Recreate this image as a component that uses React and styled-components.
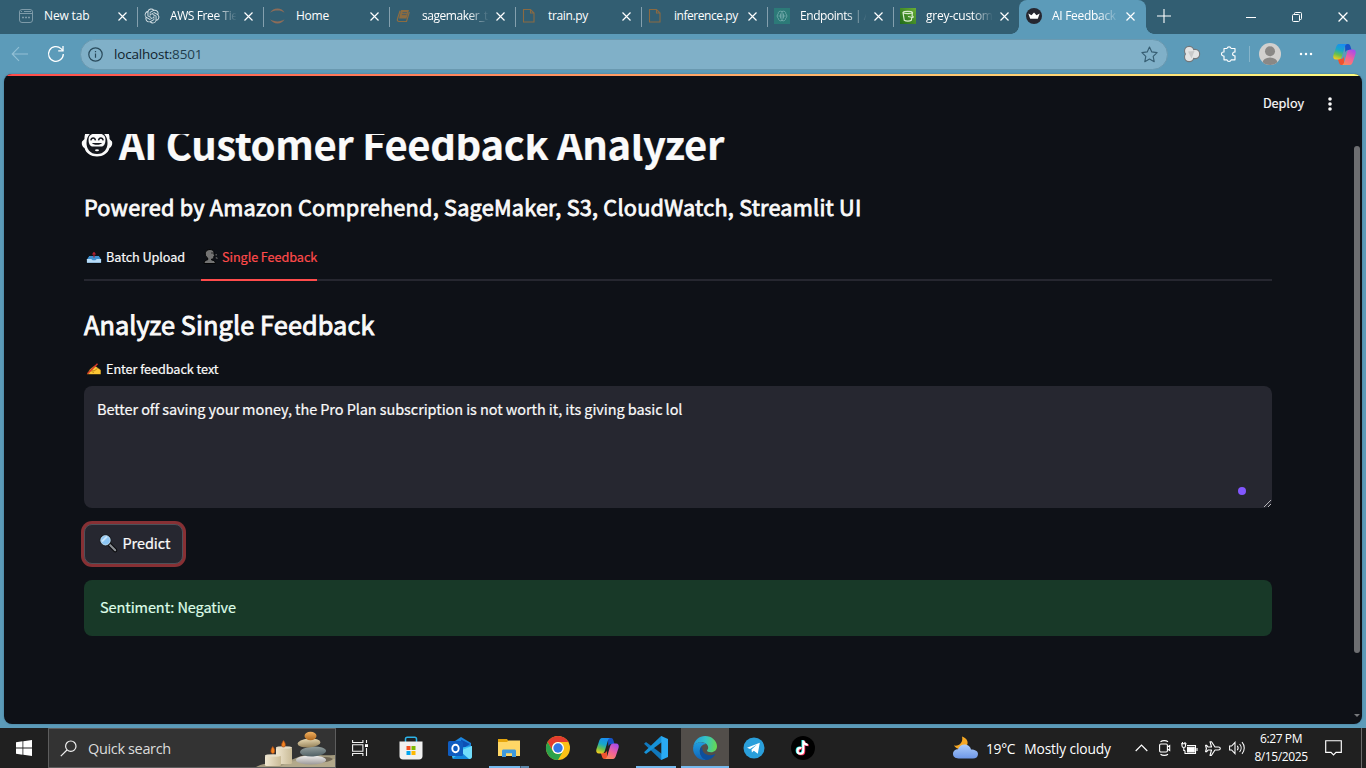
import React from "react";
import styled, { createGlobalStyle, css } from "styled-components";

const ui = `"Open Sans", "Noto Sans", sans-serif`;
const source = `"Noto Sans CJK SC", "Noto Sans", sans-serif`;

const GlobalStyle = createGlobalStyle`
  * { box-sizing: border-box; }
  html, body { margin: 0; padding: 0; background: #5c9bb9; }
  body { width: 1366px; height: 768px; overflow: hidden; font-family: ${ui}; }
  svg { display: block; flex: none; overflow: visible; }
  h1, h2, h3, p { margin: 0; }
  button, textarea { font: inherit; }
`;

const Screen = styled.div`
  width: 1366px;
  height: 768px;
  display: flex;
  flex-direction: column;
  overflow: hidden;
  background: #5c9bb9;
`;

/* ---------- browser chrome ---------- */

const TabStrip = styled.div`
  height: 34px;
  flex: none;
  display: flex;
  padding-left: 12px;
  background: #325e72;
`;

const Tab = styled.div`
  width: ${(p) => (p.$active ? 127 : 126)}px;
  height: 34px;
  display: flex;
  align-items: center;
  position: relative;
  padding: 0 0 2px 6px;
  color: #fff;
  ${(p) =>
    p.$divider &&
    css`
      &::after {
        content: "";
        position: absolute;
        right: 0;
        top: 7px;
        width: 1px;
        height: 20px;
        background: #84a0ae;
      }
    `}
  ${(p) =>
    p.$active &&
    css`
      background: #5c9bb9;
      border-radius: 8px 8px 0 0;
      margin-left: -1px;
      padding-left: 7px;
      &::before,
      &::after {
        content: "";
        position: absolute;
        bottom: 0;
        width: 8px;
        height: 8px;
      }
      &::before {
        left: -8px;
        background: radial-gradient(circle at 0 0, #325e72 7.5px, #5c9bb9 8px);
      }
      &::after {
        right: -8px;
        background: radial-gradient(circle at 100% 0, #325e72 7.5px, #5c9bb9 8px);
      }
    `}
`;

const Favicon = styled.span`
  width: 16px;
  height: 16px;
  margin-right: 10px;
  flex: none;
`;

const TabTitle = styled.span`
  width: 66px;
  white-space: nowrap;
  font-size: 12px;
  line-height: 18px;
  letter-spacing: ${(p) => p.$ls || 0}px;
  ${(p) =>
    p.$fade &&
    css`
      mask-image: linear-gradient(90deg, #000 46px, transparent 67px);
    `}
`;

const TabClose = styled.span`
  margin-left: 8px;
`;

const NewTab = styled.div`
  width: 34px;
  padding: 9px 0 0 11px;
`;

const WindowControls = styled.div`
  margin-left: auto;
  display: flex;
`;

const WindowButton = styled.div`
  width: 46px;
  height: 34px;
  display: grid;
  place-items: center;
`;

const Toolbar = styled.div`
  height: 40px;
  flex: none;
  display: flex;
  align-items: center;
  padding-left: 11px;
`;

const NavIcon = styled.span`
  width: ${(p) => p.$w}px;
  flex: none;
`;

const AddressBar = styled.div`
  width: 1088px;
  height: 31px;
  display: flex;
  align-items: center;
  border: 1px solid #6a99b0;
  border-radius: 16px;
  background: #80b0c8;
  padding: 0 9px 0 7px;
  margin-right: 16px;
`;

const Url = styled.span`
  flex: 1;
  margin-left: 11px;
  font-size: 13.5px;
  line-height: 20px;
  letter-spacing: -0.2px;
  color: #10232d;
  b { font-weight: 400; color: #1f3e4d; }
`;

const ToolDivider = styled.span`
  width: 1px;
  height: 16px;
  background: #86b4ca;
  margin: 0 9px 0 12px;
`;

/* ---------- page ---------- */

const Page = styled.div`
  height: 650px;
  flex: none;
  margin: 0 4px 4px;
  border-radius: 8px;
  overflow: hidden;
  display: flex;
  flex-direction: column;
  background: #0e1117;
  font-family: ${source};
  color: #fafafa;
  -webkit-text-stroke: 0.2px;
  position: relative;
  box-shadow: 0 0 2px #3d7391;
`;

const Decoration = styled.div`
  height: 2px;
  flex: none;
  background: linear-gradient(90deg, #ff4b4b, #fffd80);
`;

const AppHeader = styled.header`
  height: 58px;
  flex: none;
  display: flex;
  justify-content: flex-end;
  align-items: center;
  padding: 0 30px 3px 0;
`;

const Deploy = styled.span`
  font-size: 12.7px;
  line-height: 20px;
  letter-spacing: -0.07px;
  margin: 0 24px 2px 0;
`;

const Main = styled.main`
  flex: 1;
  min-height: 0;
  overflow: hidden;
  padding: 0 90px 0 80px;
  display: flex;
  flex-direction: column;
  align-items: stretch;
`;

const Title = styled.h1`
  display: flex;
  align-items: center;
  height: 48px;
  margin: -15px 0 0 -3px;
  font-size: 40px;
  line-height: 48px;
  font-weight: 700;
  letter-spacing: -0.36px;
  white-space: nowrap;
  flex: none;
  svg { margin-right: 6px; }
`;

const Heading = styled.h2`
  font-size: ${(p) => p.$size}px;
  line-height: 36px;
  height: 36px;
  flex: none;
  font-weight: 400;
  -webkit-text-stroke: ${(p) => p.$stroke}px;
  letter-spacing: ${(p) => p.$ls || 0}px;
  margin-top: ${(p) => p.$top}px;
  white-space: nowrap;
`;

const PageTabs = styled.div`
  display: flex;
  flex: none;
  gap: 16px;
  height: 45px;
  margin-top: 11px;
  box-shadow: inset 0 -2px #262730;
`;

const PageTab = styled.div`
  display: flex;
  align-items: center;
  gap: 4px;
  padding: 0 0 5px 2px;
  font-size: 12.7px;
  letter-spacing: -0.08px;
  white-space: nowrap;
  width: ${(p) => p.$w}px;
  color: ${(p) => (p.$selected ? "#ff4b4b" : "#fafafa")};
  box-shadow: ${(p) => (p.$selected ? "inset 0 -2px #ff4b4b" : "none")};
`;

const FieldLabel = styled.label`
  display: flex;
  align-items: center;
  gap: 4px;
  flex: none;
  height: 22px;
  margin-top: 15px;
  padding-left: 2px;
  font-size: 12.7px;
  letter-spacing: -0.07px;
`;

const TextField = styled.div`
  height: 122px;
  flex: none;
  margin-top: 7px;
  padding: 11px 13px;
  border-radius: 8px;
  background: #262730;
  font-size: 14.5px;
  line-height: 24px;
  letter-spacing: -0.077px;
  position: relative;
  white-space: nowrap;
`;

const StatusDot = styled.span`
  position: absolute;
  right: 26px;
  bottom: 13px;
  width: 8px;
  height: 8px;
  border-radius: 50%;
  background: #8257fe;
`;

const Resizer = styled.span`
  position: absolute;
  right: 1px;
  bottom: 1px;
`;

const PredictButton = styled.button`
  width: 99px;
  height: 40px;
  flex: none;
  margin-top: 16px;
  padding: 0 0 3px 14px;
  display: flex;
  align-items: center;
  gap: 5.5px;
  border: 1px solid #4f5159;
  border-radius: 8px;
  background: #262730;
  color: #fafafa;
  font-size: 14.5px;
  letter-spacing: -0.08px;
  box-shadow: 0 0 0 3px #873034;
`;

const Alert = styled.div`
  height: 56px;
  flex: none;
  margin-top: 16px;
  padding: 15px 16px;
  border-radius: 8px;
  background: #183928;
  color: #dffde9;
  font-size: 14.5px;
  line-height: 24px;
  letter-spacing: -0.08px;
`;

const ScrollThumb = styled.div`
  position: absolute;
  right: 2px;
  top: 72px;
  width: 6px;
  height: 507px;
  border-radius: 3px;
  background: #6d6e71;
`;

const ScrollArrow = styled.div`
  position: absolute;
  right: 2px;
  bottom: 7px;
  border: 3px solid transparent;
  border-top-color: #77797c;
  border-bottom: 0;
`;

/* ---------- taskbar ---------- */

const Taskbar = styled.div`
  height: 40px;
  flex: none;
  display: flex;
  background: #202020;
  color: #fff;
`;

const TaskSlot = styled.div`
  width: 48px;
  height: 40px;
  flex: none;
  margin-right: ${(p) => p.$gap || 0}px;
  display: grid;
  place-items: center;
  position: relative;
  background: ${(p) => (p.$active ? "#524e4a" : "transparent")};
  ${(p) =>
    p.$running &&
    css`
      &::after {
        content: "";
        position: absolute;
        bottom: 0;
        left: ${p.$active ? 0 : 4}px;
        right: ${p.$active ? 0 : 4}px;
        height: 2px;
        background: ${p.$stacked ? "linear-gradient(90deg, #76b9ed 31px, #3f5a70 31px 32px, #5c88ab 32px)" : "#76b9ed"};
      }
    `}
`;

const SearchBox = styled.div`
  width: 288px;
  height: 40px;
  flex: none;
  display: flex;
  align-items: center;
  border: 1px solid #5d5d5d;
  background: #333;
  padding-left: 11px;
`;

const SearchText = styled.span`
  flex: 1;
  margin-left: 11px;
  font-size: 14.5px;
  letter-spacing: -0.35px;
  color: #dcdcdc;
`;

const Tray = styled.div`
  margin-left: auto;
  display: flex;
  align-items: center;
  width: 413px;
`;

const Weather = styled.div`
  display: flex;
  align-items: center;
  flex: none;
  width: 182px;
  font-size: 13.8px;
  white-space: nowrap;
`;

const WeatherText = styled.span`
  margin-left: ${(p) => p.$left}px;
  letter-spacing: ${(p) => p.$ls || 0}px;
`;

const TrayIcons = styled.div`
  display: flex;
  align-items: center;
  gap: 8px;
`;

const TrayIcon = styled.span`
  margin-right: ${(p) => p.$after || 0}px;
`;

const Clock = styled.div`
  width: 64px;
  margin-left: 3px;
  display: flex;
  flex-direction: column;
  align-items: center;
  font-size: 12px;
  line-height: 18px;
  letter-spacing: -0.4px;
  white-space: nowrap;
`;

const Notifications = styled.div`
  margin: 0 19px 0 12px;
`;

const DesktopEdge = styled.div`
  width: 1px;
  height: 40px;
  background: #6b6b6b;
`;

/* ---------- icons ---------- */

const CloseGlyph = ({ size = 9, color = "#fff" }) => (
  <svg width={size} height={size} viewBox="0 0 9 9" stroke={color} strokeWidth="1.15" fill="none">
    <path d="M.5.5l8 8M8.5.5l-8 8" />
  </svg>
);

const NewTabIcon = () => (
  <svg width="16" height="16" viewBox="0 0 16 16" fill="none" stroke="#7e9ba9" strokeWidth="1">
    <rect x="1.5" y="1.5" width="13" height="13" rx="2.5" />
    <path d="M1.5 5.5h13M3 3.5h1M6 3.5h7" />
    <path d="M4 9.5h2M7 9.5h2M10 9.5h2" strokeWidth="1.5" />
  </svg>
);

const KnotIcon = () => (
  <svg width="15" height="15" viewBox="-.8 -.8 24 24" fill="#d5e0e5">
    <path d="M22.28 9.82a5.98 5.98 0 0 0-.52-4.91 6.05 6.05 0 0 0-6.51-2.9A6.07 6.07 0 0 0 4.98 4.18a5.98 5.98 0 0 0-4 2.9 6.05 6.05 0 0 0 .74 7.1 5.98 5.98 0 0 0 .51 4.91 6.05 6.05 0 0 0 6.52 2.9A5.98 5.98 0 0 0 13.26 24a6.06 6.06 0 0 0 5.77-4.21 5.99 5.99 0 0 0 4-2.9 6.06 6.06 0 0 0-.75-7.07zm-9.02 12.61a4.48 4.48 0 0 1-2.88-1.04l.14-.08 4.78-2.76a.8.8 0 0 0 .39-.68v-6.74l2.02 1.17v5.62a4.5 4.5 0 0 1-4.45 4.51zM3.6 18.3a4.47 4.47 0 0 1-.54-3.01l.14.08 4.78 2.76a.77.77 0 0 0 .78 0l5.84-3.37v2.33l-4.85 2.84a4.5 4.5 0 0 1-6.15-1.63zM2.34 7.9a4.49 4.49 0 0 1 2.37-1.98v5.68a.77.77 0 0 0 .39.68l5.81 3.35-2.02 1.17-4.83-2.79A4.5 4.5 0 0 1 2.34 7.87zm16.6 3.86L13.1 8.36l2.02-1.16 4.83 2.79a4.49 4.49 0 0 1-.68 8.1v-5.68a.79.79 0 0 0-.33-.65zm2.01-3.02-.14-.09-4.77-2.78a.78.78 0 0 0-.79 0L9.41 9.23V6.9l4.83-2.79a4.5 4.5 0 0 1 6.71 4.63zM8.31 12.86l-2.02-1.16V6.07a4.5 4.5 0 0 1 7.38-3.45l-.14.08-4.78 2.76a.8.8 0 0 0-.39.68zm1.1-2.36L12 9l2.6 1.5v3L12 15l-2.6-1.5z" />
  </svg>
);

const JupyterIcon = () => (
  <svg width="16" height="16" viewBox="0 0 16 16" fill="#8d6c58">
    <path d="M0 4.700C1.500 2 4.500.5 7.500.5s6 1.500 7 4.200C12.500 3.200 10 2.600 7.500 2.600S2 3.200 0 4.700z" />
    <path d="M0 11.300C1.500 14 4.500 15.500 7.500 15.500s6-1.500 7-4.200c-2 1.500-4.500 2.100-7 2.100S2 12.800 0 11.300z" />
  </svg>
);

const BookIcon = () => (
  <svg width="16" height="16" viewBox="0 0 16 16">
    <path d="M5 2h8l-2.500 8.500H3z" fill="#8d6c40" />
    <path d="M4.100 2.800L1.500 10.800c-.6 1.700.2 2.700 1.500 2.700h7.500L13.300 4" fill="none" stroke="#8d6c40" strokeWidth="1.200" />
    <path d="M6.500 4.600h4.500M5.900 6.600h4.500" stroke="#48606a" strokeWidth=".9" />
  </svg>
);

const FileIcon = () => (
  <svg width="16" height="16" viewBox="0 0 16 16" fill="none" stroke="#8a6a42" strokeWidth="1.100">
    <path d="M1.500 1.500h7l3.500 3.500v9h-10.500zM8.500 1.500v3.500h3.500" />
  </svg>
);

const EndpointsIcon = () => (
  <svg width="16" height="16" viewBox="0 0 16 16">
    <rect width="16" height="16" fill="#2c7a78" />
    <g fill="none" stroke="#72a9aa" strokeWidth=".9">
      <path d="M8 3v10M8 3.500C5.500 2.500 4 4 4.200 5.800 2.800 7 2.800 9.200 4.200 10.200 4.200 12 6 13.500 8 12.500M8 3.500c2.500-1 4 .5 3.800 2.300 1.400 1.200 1.400 3.400 0 4.400 0 1.800-1.800 3.300-3.800 2.300" />
      <path d="M4.500 8h2.300M9.200 8h2.300M6.500 5.500v5M9.500 5.500v5" />
    </g>
  </svg>
);

const BucketIcon = () => (
  <svg width="16" height="16" viewBox="0 0 16 16">
    <defs>
      <linearGradient id="bk" x1="0" y1="1" x2="1" y2="0">
        <stop offset="0" stopColor="#1f6b1a" />
        <stop offset="1" stopColor="#69ae35" />
      </linearGradient>
    </defs>
    <rect width="16" height="16" fill="url(#bk)" />
    <path d="M3 4.500l1.300 7.800c1.500 1.200 5.500 1.200 7 0L12 8.500M3 4.500C4 3 11.500 3 12.500 4.500 11.500 6 4 6 3 4.500zM8 8.500l4.500 1c1 0 1-1 0-1.500M12.500 4.500L12 8" fill="none" stroke="#d9ecce" strokeWidth="1.200" />
  </svg>
);

const CrownIcon = () => (
  <svg width="16" height="16" viewBox="0 0 16 16">
    <circle cx="8" cy="8" r="8" fill="#262730" />
    <path d="M2.300 5.600l3.200 1.600L8 4.600l2.500 2.600 3.200-1.600-1.900 5.200H4.200z" fill="#fff" />
  </svg>
);

const BackIcon = () => (
  <svg width="18" height="16" viewBox="0 0 18 16" fill="none" stroke="#93c0d5" strokeWidth="1.100">
    <path d="M17 8H1.500M8 1.200L1.200 8 8 14.800" />
  </svg>
);

const ReloadIcon = () => (
  <svg width="18" height="18" viewBox="0 0 18 18" fill="none" stroke="#fff" strokeWidth="1.300">
    <path d="M16.300 9A7.400 7.400 0 1 1 14 3.600l2 2" />
    <path d="M16 1v4.800h-4.800" />
  </svg>
);

const InfoIcon = () => (
  <svg width="15" height="15" viewBox="0 0 15 15" fill="none" stroke="#28495a" strokeWidth="1.200">
    <circle cx="7.500" cy="7.500" r="6.700" />
    <path d="M7.500 6.500v4.300M7.500 3.900v1.300" />
  </svg>
);

const StarIcon = () => (
  <svg width="17" height="17" viewBox="0 0 17 17" fill="none" stroke="#365e73" strokeWidth="1.150" strokeLinejoin="round">
    <path d="M8.500 1l2.300 4.900 5.300.7-3.900 3.700 1 5.400-4.700-2.600-4.700 2.600 1-5.400L.9 6.600l5.300-.7z" />
  </svg>
);

const TrefoilIcon = () => (
  <svg width="16" height="16" viewBox="0 0 16 16">
    <g fill="#d8d8d8" stroke="#74777a" strokeWidth="1.600">
      <circle cx="5.200" cy="5" r="4.400" /><circle cx="5.200" cy="11" r="4.400" /><circle cx="11" cy="8" r="4.400" />
    </g>
    <g fill="#e4e4e4"><circle cx="5.200" cy="5" r="4.100" /><circle cx="5.200" cy="11" r="4.100" /><circle cx="11" cy="8" r="4.100" /></g>
    <path d="M4 5.500l6.500-.5-3 7.500z" fill="#c9c9c9" />
  </svg>
);

const PuzzleIcon = () => (
  <svg width="16" height="16" viewBox="0 0 16 16" fill="none" stroke="#fff" strokeWidth="1.150" strokeLinejoin="round">
    <path d="M3 2.500h3a2.100 2.100 0 0 1 4.100 0h3.900v3.600a1.500 1.500 0 0 0-1 3.600l1 .2v3.900h-3.900a2.100 2.100 0 0 1-4.100 0H3V10H2.500a2 2 0 0 1 0-4H3z" />
  </svg>
);

const AvatarIcon = () => (
  <svg width="22" height="22" viewBox="0 0 22 22">
    <defs><clipPath id="av"><circle cx="11" cy="11" r="11" /></clipPath></defs>
    <g clipPath="url(#av)">
      <rect width="22" height="22" fill="#d2d0ce" />
      <circle cx="11" cy="8.300" r="5" fill="#8a8886" />
      <ellipse cx="11" cy="20" rx="7.500" ry="5.500" fill="#8a8886" />
    </g>
  </svg>
);

const DotsIcon = () => (
  <svg width="14" height="4" viewBox="0 0 14 4" fill="#fff">
    <circle cx="2" cy="2" r="1.250" /><circle cx="7" cy="2" r="1.250" /><circle cx="12" cy="2" r="1.250" />
  </svg>
);

const KebabIcon = () => (
  <svg width="4" height="14" viewBox="0 0 4 14" fill="#fafafa">
    <circle cx="2" cy="2" r="1.800" /><circle cx="2" cy="7" r="1.800" /><circle cx="2" cy="12" r="1.800" />
  </svg>
);

const CopilotIcon = ({ id }) => (
  <svg width="23" height="21" viewBox="0 0 23 21">
    <defs>
      <linearGradient id={id + "a"} x1=".6" y1="0" x2=".3" y2="1">
        <stop offset="0" stopColor="#1a8df0" /><stop offset=".4" stopColor="#17a7c9" />
        <stop offset=".7" stopColor="#69c04c" /><stop offset="1" stopColor="#f4cd1d" />
      </linearGradient>
      <linearGradient id={id + "b"} x1=".7" y1="0" x2=".2" y2="1">
        <stop offset="0" stopColor="#a94bea" /><stop offset=".5" stopColor="#f0609c" /><stop offset="1" stopColor="#fd8b55" />
      </linearGradient>
    </defs>
    <path d="M12 0h3c1.800 0 2.200 1.500 2.700 3.200L18.500 6h-3.200c-1.800 0-2.600 1-3 2.500z" fill="#1653c6" />
    <path d="M11 21H8.500c-1.800 0-2.300-1.600-2.800-3.300L4.800 15H8c1.500 0 2.500-1 3-2.500z" fill="#f0532f" />
    <path d="M6 0h8c-1.200.4-1.800 1.500-2.300 3.200L9 12.300C8.400 14.500 7.400 15.500 5.500 15.500H3c-2.300 0-3.300-1.800-2.600-4.300L3 3.500C3.700 1.200 4.500 0 6 0z" fill={`url(#${id}a)`} />
    <path d="M17 21H9c1.200-.4 1.800-1.500 2.300-3.200l2.700-9C14.600 6.500 15.600 5.500 17.500 5.500H20c2.300 0 3.300 1.800 2.600 4.300L20 17.500c-.7 2.300-1.500 3.500-3 3.500z" fill={`url(#${id}b)`} />
  </svg>
);

const FaceIcon = () => (
  <svg width="32" height="34" viewBox="0 0 32 34">
    <path d="M16 0C8 0 3 6 3.500 13L1 15.500c-.7 3 .3 5.500 2.500 6.500C5 27.500 10 30.500 16 30.500S27 27.500 28.500 22c2.200-1 3.200-3.500 2.500-6.500L28.500 13C29 6 24 0 16 0z" fill="#fafafa" />
    <path d="M16 5C9 5 5.500 11 5.500 17S9 28 16 28s10.500-5 10.500-11S23 5 16 5z" fill="#15181e" />
    <path d="M8 11C10 6 22 6 24 11c1.300 4.500-.5 9.500-3 9.500H11C8.500 20.500 6.700 15.500 8 11z" fill="#fafafa" />
    <path d="M9.800 14.300c.7-3.200 4-3.200 4.700 0M17.500 14.300c.7-3.200 4-3.200 4.700 0" stroke="#15181e" strokeWidth="1.500" fill="none" />
    <path d="M11 17h10c-.8 2.400-9.200 2.400-10 0z" fill="#15181e" />
    <ellipse cx="16" cy="24.300" rx="2" ry="1" fill="#fafafa" />
  </svg>
);

const OutboxIcon = () => (
  <svg width="16" height="16" viewBox="0 0 16 16">
    <path d="M3 7.500h10l2.500 4V15H.5v-3.500z" fill="#3e8fd0" stroke="#050607" strokeWidth=".8" />
    <path d="M.9 11h4.300l1.500 1.300h2.600L10.800 11h4.300v3.700H.9z" fill="#b9dcf7" />
    <path d="M8 4.500v5" stroke="#a81f30" strokeWidth="1.200" />
    <path d="M5.800 6.500L8 3.700l2.200 2.800z" fill="#b01f2e" />
  </svg>
);

const SpeakerHeadIcon = () => (
  <svg width="15" height="17" viewBox="0 0 15 17" stroke="#050607" strokeWidth="1">
    <path d="M1 15.500c0-2.300 1.500-3.300 3.700-3.700V10C2.500 8.500 1.800 6.500 2.500 4.300 3.500 1.500 8 .5 10.200 2.700c.8.900.8 2 .7 3.300l1 1.800-1.100.6c0 2-.5 2.700-2.300 2.700v.8c2.500.4 3.900 1.300 3.900 3.600z" fill="#737373" />
    <path d="M13.200 6v1.500M12.800 9.500l1.700 1" strokeWidth="1.200" stroke="#686868" />
    <circle cx="9" cy="5" r=".7" fill="#111" stroke="none" />
  </svg>
);

const WritingHandIcon = () => (
  <svg width="16" height="14" viewBox="0 0 16 14">
    <path d="M.8 13.300l3-5L8.500 4.500 11 6l4 3v4.500H5z" fill="#fcc735" stroke="#1a1307" strokeWidth=".6" />
    <path d="M5 8.500l3 1.500 3.500-2.500M5.500 10.500l2.500 1" stroke="#b87a14" strokeWidth=".8" fill="none" />
    <path d="M1.500 12.800L11.500 2.800" stroke="#d9372b" strokeWidth="1.500" />
  </svg>
);

const MagnifierIcon = () => (
  <svg width="18" height="18" viewBox="0 0 18 18">
    <path d="M10.500 10.500l5.700 5.700" stroke="#0b0c0e" strokeWidth="4.200" strokeLinecap="round" />
    <path d="M11 11l5.200 5.200" stroke="#8e9297" strokeWidth="2" strokeLinecap="round" />
    <circle cx="6.500" cy="6.300" r="5.500" fill="#8cc6f5" stroke="#191c20" strokeWidth="1.200" />
    <circle cx="6.500" cy="6.300" r="4.700" fill="none" stroke="#c3d9e8" strokeWidth=".8" />
    <path d="M3 7.500L8 2.500" stroke="#c9e6fc" strokeWidth="1.800" />
  </svg>
);

const WindowsIcon = () => (
  <svg width="16" height="16" viewBox="0 0 16 16" fill="#fff">
    <path d="M0 2.200L6.500 1.300v6.200H0zM7.300 1.200L16 0v7.500H7.300zM0 8.400h6.500v6.300L0 13.800zM7.300 8.400H16V16l-8.700-1.200z" />
  </svg>
);

const SearchIcon = () => (
  <svg width="17" height="17" viewBox="0 0 17 17" fill="none" stroke="#f0f0f0" strokeWidth="1.200">
    <circle cx="10.800" cy="6.200" r="5.200" /><path d="M7 10L.8 16.200" />
  </svg>
);

const StonesArt = () => (
  <svg width="79" height="38" viewBox="0 0 79 38">
    <defs>
      <linearGradient id="cd" x1="0" x2="1"><stop offset="0" stopColor="#f1e8d2" /><stop offset="1" stopColor="#c9bb97" /></linearGradient>
      <linearGradient id="s1" x1="0" y1="0" x2="0" y2="1"><stop offset="0" stopColor="#e9d9b2" /><stop offset="1" stopColor="#97835a" /></linearGradient>
      <linearGradient id="s2" x1="0" y1="0" x2="0" y2="1"><stop offset="0" stopColor="#95a09f" /><stop offset="1" stopColor="#4f5f64" /></linearGradient>
      <linearGradient id="s3" x1="0" y1="0" x2="0" y2="1"><stop offset="0" stopColor="#f0efef" /><stop offset="1" stopColor="#9c9998" /></linearGradient>
      <linearGradient id="s4" x1="0" y1="0" x2="0" y2="1"><stop offset="0" stopColor="#f0b160" /><stop offset="1" stopColor="#b2691e" /></linearGradient>
    </defs>
    <path d="M0 38C10 32 30 34 40 29s20-2 39-3v12z" fill="#a39a7e" />
    <path d="M30 34c12-4 28-4 49-4v8H24z" fill="#b3a98b" />
    <path d="M60 30c8-3 14-2 17 0-2 2-8 4-16 3z" fill="#6f6553" />
    <rect x="20" y="18" width="16" height="17" rx="1.500" fill="url(#cd)" /><ellipse cx="28" cy="18.500" rx="8" ry="1.300" fill="#e6dcc5" />
    <rect x="9" y="26" width="16" height="11" rx="1.500" fill="url(#cd)" /><ellipse cx="17" cy="26.500" rx="8" ry="1.300" fill="#e9e0ca" />
    <path d="M27.500 11.500c2.500 3 2.500 6.500 0 6.500s-2.500-3 0-6.500zM16.800 17.500c2.500 3 2.500 7 0 7s-2.500-4 0-7z" fill="#f28420" stroke="#a8481a" strokeWidth=".7" />
    <ellipse cx="55" cy="31" rx="15" ry="4.500" fill="url(#s3)" />
    <ellipse cx="57" cy="22.500" rx="13" ry="5" fill="url(#s2)" transform="rotate(-3 57 22)" />
    <ellipse cx="53" cy="14" rx="11.500" ry="4.500" fill="url(#s1)" transform="rotate(-4 53 14)" />
    <ellipse cx="54.500" cy="7" rx="6" ry="4.200" fill="url(#s4)" />
  </svg>
);

const TaskViewIcon = () => (
  <svg width="17" height="16" viewBox="0 0 17 16" fill="none" stroke="#f2f2f2" strokeWidth="1.100">
    <path d="M.6 0v2.500h10.300V0M.6 16v-2.500h10.300V16M.6 4.800h10.300v6.500H.6zM14.500 0v3M14.500 8v8" />
    <path d="M13 4.200h3v2.800h-3z" fill="#fff" stroke="none" />
  </svg>
);

const StoreIcon = () => (
  <svg width="24" height="24" viewBox="0 0 24 24">
    <path d="M6.500 6V3c0-1.200.6-1.800 1.800-1.800h7.400c1.200 0 1.800.6 1.800 1.800v3" fill="none" stroke="#2cb3e8" strokeWidth="1.500" />
    <path d="M.5 5.500h23V20c0 2.300-1.200 3.500-3.500 3.500H4C1.700 23.500.5 22.300.5 20z" fill="#f0f0f0" />
    <path d="M7.500 10h4v4h-4z" fill="#f25022" /><path d="M12.500 10h4v4h-4z" fill="#7fba00" />
    <path d="M7.500 15h4v4h-4z" fill="#00a4ef" /><path d="M12.500 15h4v4h-4z" fill="#ffb900" />
  </svg>
);

const OutlookIcon = () => (
  <svg width="24" height="22" viewBox="0 0 24 22">
    <path d="M4 6L13 0l10 6v5L13 16z" fill="#1c86e0" />
    <path d="M13 2.500l9 4.500-9 6z" fill="#0d4fb5" />
    <path d="M4 12l20-3v10c0 1.800-1 3-3 3H7c-2 0-3-1.200-3-3z" fill="#36c2f6" />
    <path d="M24 9v10c0 1.800-1 3-3 3L9 15z" fill="#72ddfb" />
    <path d="M4 22l9-7 8 7z" fill="#1387da" />
    <rect y="4" width="15" height="15" rx="1.500" fill="#0f5cc0" />
    <ellipse cx="7.500" cy="11.500" rx="3.200" ry="3.700" fill="none" stroke="#fff" strokeWidth="1.900" />
  </svg>
);

const ExplorerIcon = () => (
  <svg width="22" height="19" viewBox="0 0 22 19">
    <path d="M0 0h9l1.500 2H22v4H0z" fill="#e5a50c" />
    <path d="M0 3h9l1.500-1.500H22V17H0z" fill="#ffd766" />
    <path d="M4 18v-6c0-1 .6-1.600 1.600-1.600h10.800c1 0 1.600.6 1.600 1.600v6h-4v-3.800H8V18z" fill="#3f9ade" />
  </svg>
);

const ChromeIcon = () => (
  <svg width="24" height="24" viewBox="0 0 24 24">
    <circle cx="12" cy="12" r="12" fill="#fbc116" />
    <path d="M1.600 6A12 12 0 0 1 22.400 6H12a6 6 0 0 0-5.200 9z" fill="#e33b2e" />
    <path d="M1.600 6A12 12 0 0 0 12 24l5.200-9a6 6 0 0 1-10.400 0z" fill="#2ba24c" />
    <circle cx="12" cy="12" r="6" fill="#fff" /><circle cx="12" cy="12" r="4.700" fill="#3277e6" />
  </svg>
);

const CodeIcon = () => (
  <svg width="24" height="24" viewBox="0 0 24 24">
    <path d="M0 7.800L2 6l16 12v6l-1.500-.5z" fill="#1179be" />
    <path d="M0 16.200L2 18 18 6V0l-1.500.5z" fill="#1692d8" />
    <path d="M17.300 0L24 3v18l-6.700 3z" fill="#2aaaf3" />
  </svg>
);

const EdgeIcon = () => (
  <svg width="24" height="24" viewBox="0 0 24 24">
    <defs>
      <linearGradient id="eg" x1="0" y1=".4" x2="1" y2=".5"><stop offset="0" stopColor="#2498db" /><stop offset=".5" stopColor="#33c3c8" /><stop offset="1" stopColor="#67d94f" /></linearGradient>
      <linearGradient id="eb" x1="0" y1="0" x2="0" y2="1"><stop offset="0" stopColor="#1f9ee0" /><stop offset="1" stopColor="#1063b8" /></linearGradient>
    </defs>
    <path d="M.2 10.500C1.500 4 6.500 0 12 0c7 0 12 5 12 10.300 0 3.700-2.700 6-6 6-2.800 0-4-.9-4-1.700 0-.7 1.200-1 1.200-3C15.200 8.500 12 6.300 8.500 6.300 4.500 6.300 1.500 8.200.2 10.500z" fill="url(#eg)" />
    <path d="M.1 12C.3 8.500 4 6.300 8 6.300c2.200 0 4 .7 5.200 1.700C9.500 8 6.800 11 6.800 14.800c0 4.500 3 8 7.200 9C6 25.500-.3 19 .1 12z" fill="url(#eb)" />
    <path d="M9.300 11c-1 5.500 4 8.500 8.500 8.300 2-.1 3.500-.8 4.500-1.200C20.700 21.300 17.500 24 14 23.900c-4.200-.4-7.200-4.300-7.200-9 0-1.700 1-3.300 2.500-3.900z" fill="#0e4f9c" />
  </svg>
);

const TelegramIcon = () => (
  <svg width="22" height="22" viewBox="0 0 22 22">
    <circle cx="11" cy="11" r="10.500" fill="#2a9fdb" />
    <path d="M4 10.800L16.800 5.700l-2 11-4-3-1.900 1.900-.4-3.100 5.500-5-7 4.400z" fill="#fff" />
  </svg>
);

const note = "M12.300 4.500v10.300a2.900 2.900 0 1 1-2.900-2.900c.4 0 .7 0 1 .2M12.300 4.500c.3 2.400 1.900 4.100 4.500 4.200";
const TikTokIcon = () => (
  <svg width="24" height="24" viewBox="0 0 24 24" fill="none" strokeWidth="2.100">
    <circle cx="12" cy="12" r="12" fill="#000" />
    <path d={note} stroke="#25f4ee" transform="translate(-.8 -.4)" />
    <path d={note} stroke="#fe2c55" transform="translate(.9 .6)" />
    <path d={note} stroke="#fff" />
  </svg>
);

const WeatherIcon = () => (
  <svg width="25" height="24" viewBox="0 0 25 24">
    <defs><linearGradient id="cl" x1="0" y1="0" x2="0" y2="1"><stop offset="0" stopColor="#aecdfa" /><stop offset="1" stopColor="#6d97e8" /></linearGradient></defs>
    <path d="M9 .5c5 1.500 7.500 6 4 10.500S3 13 1 9.500C6 10.500 10.500 6.500 9 .5z" fill="#f6a823" />
    <path d="M5.500 22.500C2 22.500 0 20.500 0 17.800s2.200-4.600 5-4.600C6 10.500 8.500 8.500 11.500 8.500c3.300 0 6 2.200 6.500 5 4 0 7 1.500 7 4.500s-2.200 4.500-5 4.500z" fill="url(#cl)" />
  </svg>
);

const ChevronIcon = () => (
  <svg width="13" height="8" viewBox="0 0 13 8" fill="none" stroke="#fff" strokeWidth="1.200"><path d="M.7 7L6.500 1.200 12.300 7" /></svg>
);

const MeetIcon = () => (
  <svg width="12" height="16" viewBox="0 0 12 16" fill="none" stroke="#fff" strokeWidth="1.100">
    <rect x=".6" y="4" width="7.800" height="8" rx="1.200" /><path d="M8.400 7l2.300-1.500v5L8.400 9M1.500 1.800C3.500.2 7 .2 9 1.800M1.500 14.200c2 1.600 5.500 1.600 7.500 0" />
  </svg>
);

const BatteryIcon = () => (
  <svg width="16" height="13" viewBox="0 0 16 13" fill="none" stroke="#fff" strokeWidth="1.100">
    <path d="M6 3.500h8.500v8H4v-3M16 6v3" /><path d="M6.500 5.300h6.700v4.600H6.500z" fill="#fff" />
    <path d="M1 1.500V4c0 1 .7 1.500 1.800 1.500S4.500 5 4.500 4V1.500M0 1.800h5.500M1.500 0v1.500M4 0v1.500M2.800 5.500v3H4" />
  </svg>
);

const PlaneIcon = () => (
  <svg width="16" height="15" viewBox="0 0 16 15" fill="none" stroke="#fff" strokeWidth="1.150" strokeLinejoin="round">
    <path d="M15.300 7.500c0-.8-.8-1.500-2-1.500H10L6.500.7H5L6.500 6H3L1.700 4.300H.6l.8 3.200-.8 3.200h1.100L3 9h3.500L5 14.300h1.500L10 9h3.300c1.200 0 2-.7 2-1.500z" />
  </svg>
);

const VolumeIcon = () => (
  <svg width="17" height="14" viewBox="0 0 17 14" fill="none" stroke="#fff" strokeWidth="1.050">
    <path d="M.6 5h2L6 1.300v11.400L2.600 9h-2z" /><path d="M8.300 4.800c1 1.300 1 3.100 0 4.400M10.600 3c2 2.300 2 5.700 0 8M13 1.200c3 3.400 3 8.200 0 11.600" />
  </svg>
);

const NotificationIcon = () => (
  <svg width="17" height="16" viewBox="0 0 17 16" fill="none" stroke="#fff" strokeWidth="1.150"><path d="M.7.7h15.600v11.600h-5.300L8.500 15 6 12.300H.7z" /></svg>
);

/* ---------- data ---------- */

const tabs = [
  { title: "New tab", icon: <NewTabIcon />, ls: -0.15 },
  { title: "AWS Free Tie", icon: <KnotIcon />, fade: true, ls: -0.4 },
  { title: "Home", icon: <JupyterIcon />, ls: -0.25 },
  { title: "sagemaker_t", icon: <BookIcon />, fade: true, ls: -0.45 },
  { title: "train.py", icon: <FileIcon />, ls: -0.35 },
  { title: "inference.py", icon: <FileIcon />, ls: -0.45 },
  { title: "Endpoints | A", icon: <EndpointsIcon />, fade: true, ls: -0.45 },
  { title: "grey-custom", icon: <BucketIcon />, fade: true, ls: -0.25 },
  { title: "AI Feedback", icon: <CrownIcon />, fade: true, active: true, ls: -0.3 },
];

const apps = [
  { icon: <StoreIcon /> },
  { icon: <OutlookIcon /> },
  { icon: <ExplorerIcon />, running: true, stacked: true },
  { icon: <ChromeIcon /> },
  { icon: <CopilotIcon id="tb" /> },
  { icon: <CodeIcon />, running: true },
  { icon: <EdgeIcon />, running: true, active: true },
  { icon: <TelegramIcon /> },
  { icon: <TikTokIcon /> },
];

export default function App() {
  return (
    <Screen>
      <GlobalStyle />
      <TabStrip>
        {tabs.map((t, i) => (
          <Tab key={t.title} $active={t.active} $divider={i < 7}>
            <Favicon>{t.icon}</Favicon>
            <TabTitle $fade={t.fade} $ls={t.ls}>{t.title}</TabTitle>
            <TabClose><CloseGlyph /></TabClose>
          </Tab>
        ))}
        <NewTab>
          <svg width="14" height="14" viewBox="0 0 14 14" stroke="#fff" strokeWidth="1.100"><path d="M7 0v14M0 7h14" /></svg>
        </NewTab>
        <WindowControls>
          <WindowButton><svg width="10" height="1"><rect width="10" height="1" fill="#fff" /></svg></WindowButton>
          <WindowButton>
            <svg width="10" height="10" viewBox="0 0 10 10" fill="none" stroke="#fff"><rect x=".5" y="2.500" width="7" height="7" rx="1" /><path d="M2.500 2V1.500q0-1 1-1h5q1 0 1 1v5q0 1-1 1H8" /></svg>
          </WindowButton>
          <WindowButton><CloseGlyph size={10} /></WindowButton>
        </WindowControls>
      </TabStrip>

      <Toolbar>
        <NavIcon $w={36}><BackIcon /></NavIcon>
        <NavIcon $w={33}><ReloadIcon /></NavIcon>
        <AddressBar>
          <InfoIcon />
          <Url>localhost:<b>8501</b></Url>
          <StarIcon />
        </AddressBar>
        <NavIcon $w={37}><TrefoilIcon /></NavIcon>
        <NavIcon $w={16}><PuzzleIcon /></NavIcon>
        <ToolDivider />
        <NavIcon $w={40}><AvatarIcon /></NavIcon>
        <NavIcon $w={34}><DotsIcon /></NavIcon>
        <CopilotIcon id="br" />
      </Toolbar>

      <Page>
        <Decoration />
        <AppHeader>
          <Deploy>Deploy</Deploy>
          <KebabIcon />
        </AppHeader>
        <Main>
          <Title><FaceIcon />AI Customer Feedback Analyzer</Title>
          <Heading $size={21.7} $top={22} $stroke={0.8} $ls={0.21}>Powered by Amazon Comprehend, SageMaker, S3, CloudWatch, Streamlit UI</Heading>
          <PageTabs>
            <PageTab $w={101}><OutboxIcon />Batch Upload</PageTab>
            <PageTab $w={116} $selected><SpeakerHeadIcon />Single Feedback</PageTab>
          </PageTabs>
          <Heading $size={25.3} $top={25} $stroke={0.9} $ls={0.09}>Analyze Single Feedback</Heading>
          <FieldLabel><WritingHandIcon />Enter feedback text</FieldLabel>
          <TextField>
            Better off saving your money, the Pro Plan subscription is not worth it, its giving basic lol
            <StatusDot />
            <Resizer>
              <svg width="7" height="7" viewBox="0 0 7 7" stroke="#b5b5b8" fill="none"><path d="M0 7L7 0M4 7l3-3" /></svg>
            </Resizer>
          </TextField>
          <PredictButton><MagnifierIcon />Predict</PredictButton>
          <Alert>Sentiment: Negative</Alert>
        </Main>
        <ScrollThumb />
        <ScrollArrow />
      </Page>

      <Taskbar>
        <TaskSlot><WindowsIcon /></TaskSlot>
        <SearchBox>
          <SearchIcon />
          <SearchText>Quick search</SearchText>
          <StonesArt />
        </SearchBox>
        <TaskSlot $gap={3}><TaskViewIcon /></TaskSlot>
        {apps.map((a, i) => (
          <TaskSlot key={i} $gap={1} $running={a.running} $active={a.active} $stacked={a.stacked}>{a.icon}</TaskSlot>
        ))}
        <Tray>
          <Weather>
            <WeatherIcon />
            <WeatherText $left={8} $ls={-0.3}>19°C</WeatherText>
            <WeatherText $left={9} $ls={-0.13}>Mostly cloudy</WeatherText>
          </Weather>
          <TrayIcons>
            <TrayIcon $after={3}><ChevronIcon /></TrayIcon>
            <TrayIcon $after={2}><MeetIcon /></TrayIcon>
            <TrayIcon><BatteryIcon /></TrayIcon>
            <TrayIcon><PlaneIcon /></TrayIcon>
            <TrayIcon><VolumeIcon /></TrayIcon>
          </TrayIcons>
          <Clock><span>6:27 PM</span><span>8/15/2025</span></Clock>
          <Notifications><NotificationIcon /></Notifications>
          <DesktopEdge />
        </Tray>
      </Taskbar>
    </Screen>
  );
}
